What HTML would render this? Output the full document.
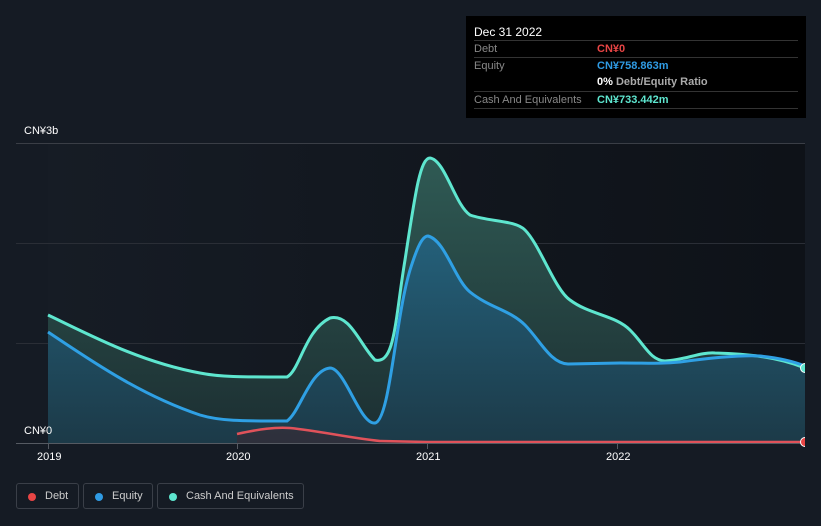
<!DOCTYPE html>
<html><head><meta charset="utf-8"><style>
html,body{margin:0;padding:0;background:#151b24;width:821px;height:526px;overflow:hidden;font-family:"Liberation Sans","Noto Sans CJK SC",sans-serif;}
.tip{position:absolute;left:466px;top:16px;width:340px;height:102px;background:#000;}
.tip .t{position:absolute;left:8px;top:9px;color:#fff;font-size:12px;}
.row{position:absolute;left:8px;width:324px;border-top:1px solid #333;height:16px;font-size:11px;color:#888;}
.row span{position:absolute;left:0;top:2px}
.row b{position:absolute;left:123px;top:2px;font-weight:bold}
.leg{position:absolute;top:483px;height:26px;border:1px solid #3a3f48;border-radius:3px;color:#ccc;font-size:11px;box-sizing:border-box;}
.leg i{position:absolute;left:11px;top:9px;width:8px;height:8px;border-radius:50%}
.leg span{position:absolute;top:6px}
.ax{position:absolute;color:#fff;font-size:11px}
</style></head><body>
<svg width="821" height="526" style="position:absolute;left:0;top:0">
<defs>
<linearGradient id="bg" x1="0" x2="1" y1="0" y2="0"><stop offset="0" stop-color="#161c25"/><stop offset="1" stop-color="#0e1218"/></linearGradient>
<linearGradient id="cf" x1="0" x2="0" y1="0" y2="1"><stop offset="0" stop-color="#2f5a54"/><stop offset="1" stop-color="#1c2e31"/></linearGradient>
<linearGradient id="ef" x1="0" x2="0" y1="0" y2="1"><stop offset="0" stop-color="#24607a"/><stop offset="1" stop-color="#1c3a48"/></linearGradient>
</defs>
<rect x="48" y="143" width="757" height="300" fill="url(#bg)"/>
<line x1="16" y1="143.5" x2="805" y2="143.5" stroke="#3a3e46"/>
<line x1="16" y1="243.5" x2="805" y2="243.5" stroke="#2a2e36"/>
<line x1="16" y1="343.5" x2="805" y2="343.5" stroke="#2a2e36"/>
<path id="cash" d="M48,315 C90,335 140,362 200,373 C220,377 240,377 287,377 C300,370 305,330 330,318 C350,313 360,345 375,360 C395,365 395,320 405,260 C415,195 420,158 430,158 C445,160 455,205 470,215 C490,222 515,220 525,230 C540,245 555,290 570,300 C590,315 615,315 630,330 C645,345 650,360 665,361 C685,360 700,352 715,353 C745,354 775,356 805,368 L805,443 L48,443 Z" fill="url(#cf)"/>
<path d="M48,332 C90,360 140,395 200,415 C220,421 240,421 287,421 C300,412 310,370 330,368 C345,368 360,425 375,423 C390,420 395,320 410,270 C417,248 422,236 428,236 C445,240 455,280 470,292 C490,308 510,310 525,325 C540,340 550,363 568,364 L620,363 C650,363 660,364 680,362 C710,358 740,355 760,356 C780,358 795,362 805,366 L805,443 L48,443 Z" fill="url(#ef)"/>
<path d="M48,315 C90,335 140,362 200,373 C220,377 240,377 287,377 C300,370 305,330 330,318 C350,313 360,345 375,360 C395,365 395,320 405,260 C415,195 420,158 430,158 C445,160 455,205 470,215 C490,222 515,220 525,230 C540,245 555,290 570,300 C590,315 615,315 630,330 C645,345 650,360 665,361 C685,360 700,352 715,353 C745,354 775,356 805,368" fill="none" stroke="#5ee6cf" stroke-width="3"/>
<path d="M48,332 C90,360 140,395 200,415 C220,421 240,421 287,421 C300,412 310,370 330,368 C345,368 360,425 375,423 C390,420 395,320 410,270 C417,248 422,236 428,236 C445,240 455,280 470,292 C490,308 510,310 525,325 C540,340 550,363 568,364 L620,363 C650,363 660,364 680,362 C710,358 740,355 760,356 C780,358 795,362 805,366" fill="none" stroke="#2fa0e4" stroke-width="3"/>
<path d="M237,434 C260,429 275,427 290,428 C320,431 350,438 380,441 L427,442 L805,442 L805,443 L237,443 Z" fill="#3a2a33" opacity="0.6"/>
<path d="M237,434 C260,429 275,427 290,428 C320,431 350,438 380,441 L427,442 L805,442" fill="none" stroke="#e0525a" stroke-width="2.5"/>
<line x1="16" y1="443.5" x2="805" y2="443.5" stroke="#555a62"/>
<line x1="48.5" y1="443" x2="48.5" y2="449" stroke="#555a62"/>
<line x1="237.5" y1="443" x2="237.5" y2="449" stroke="#555a62"/>
<line x1="427.5" y1="443" x2="427.5" y2="449" stroke="#555a62"/>
<line x1="617.5" y1="443" x2="617.5" y2="449" stroke="#555a62"/>
<rect x="805" y="0" width="16" height="480" fill="#151b24"/>
<circle cx="805" cy="368" r="4.5" fill="#5ee6cf" stroke="#fff" stroke-width="1"/>
<circle cx="805" cy="442" r="4.5" fill="#e84545" stroke="#fff" stroke-width="1"/>
<rect x="805" y="360" width="16" height="90" fill="#151b24"/>
</svg>
<div class="ax" style="left:24px;top:125px">CN¥3b</div>
<div class="ax" style="left:24px;top:425px">CN¥0</div>
<div class="ax" style="left:37px;top:451px">2019</div>
<div class="ax" style="left:226px;top:451px">2020</div>
<div class="ax" style="left:416px;top:451px">2021</div>
<div class="ax" style="left:606px;top:451px">2022</div>
<div class="tip">
<div class="t">Dec 31 2022</div>
<div class="row" style="top:24px"><span>Debt</span><b style="color:#e84545">CN¥0</b></div>
<div class="row" style="top:41px"><span>Equity</span><b style="color:#2f9be4">CN¥758.863m</b></div>
<div class="row" style="top:58px;border-top:none"><b style="color:#fff">0% <span style="position:static;color:#aaa;font-weight:bold">Debt/Equity Ratio</span></b></div>
<div class="row" style="top:75px"><span>Cash And Equivalents</span><b style="color:#5ee6cf">CN¥733.442m</b></div>
<div class="row" style="top:92px;height:0"></div>
</div>
<div class="leg" style="left:16px;width:63px"><i style="background:#e84545"></i><span style="left:28px">Debt</span></div>
<div class="leg" style="left:83px;width:70px"><i style="background:#2f9be4"></i><span style="left:28px">Equity</span></div>
<div class="leg" style="left:157px;width:147px"><i style="background:#5ee6cf"></i><span style="left:28px">Cash And Equivalents</span></div>
</body></html>
